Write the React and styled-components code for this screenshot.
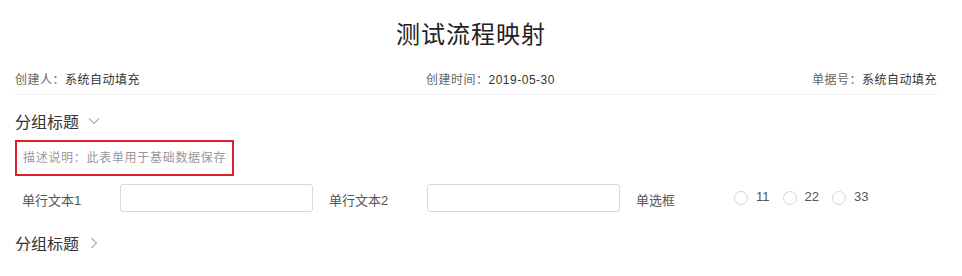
import React from "react";
import styled, { createGlobalStyle } from "styled-components";

const GlobalStyle = createGlobalStyle`
  body {
    margin: 0;
    background: #fff;
    font-family: "Liberation Sans", "Noto Sans CJK SC", sans-serif;
    color: #333;
  }
`;

const Page = styled.div`
  padding: 0 25px 0 15px;
`;

const Title = styled.h1`
  margin: 0;
  padding-top: 18px;
  height: 40px;
  line-height: 34px;
  font-size: 24px;
  font-weight: normal;
  letter-spacing: 1px;
  text-align: center;
  color: #222;
  padding-right: 10px;
`;

const MetaRow = styled.div`
  display: grid;
  grid-template-columns: 411px 1fr auto;
  align-items: center;
  height: 32px;
  padding-top: 4px;
  font-size: 12px;
  letter-spacing: 0.5px;
  border-bottom: 1px dotted #e3e3e3;
`;

const MetaItem = styled.div`
  white-space: nowrap;
`;

const MetaLabel = styled.span`
  color: #666;
`;

const MetaValue = styled.span`
  color: #333;
`;

const GroupHead = styled.div`
  display: flex;
  align-items: center;
  gap: 9px;
  height: 16px;
  margin-top: ${(p) => p.$top}px;
  font-size: 16px;
  color: #333;
  cursor: pointer;
`;

const Chevron = styled.svg`
  width: 12px;
  height: 12px;
  color: #777;
`;

const Desc = styled.div`
  display: inline-block;
  margin-top: 11px;
  padding: 0 6px;
  height: 32px;
  line-height: 32px;
  border: 2px solid #e0202a;
  font-size: 12px;
  letter-spacing: 0.7px;
  color: #999;
`;

const FormRow = styled.div`
  display: grid;
  grid-template-columns: repeat(3, 307px);
  margin-top: 7px;
`;

const Field = styled.div`
  display: flex;
  align-items: center;
  height: 30px;
  padding-right: 9px;
`;

const Label = styled.label`
  flex: 0 0 98px;
  padding-left: 7px;
  font-size: 13px;
  color: #555;
  margin-top: 2px;
`;

const TextInput = styled.input`
  flex: 1;
  min-width: 0;
  height: 28px;
  box-sizing: border-box;
  border: 1px solid #d9d9d9;
  border-radius: 3px;
  outline: none;
  padding: 0 8px;
  font-size: 12px;
`;

const RadioGroup = styled.div`
  display: flex;
  align-items: center;
  gap: 13px;
`;

const RadioItem = styled.label`
  display: flex;
  align-items: center;
  gap: 8px;
  font-size: 13px;
  color: #555;
`;

const RadioCircle = styled.span`
  width: 14px;
  height: 14px;
  box-sizing: border-box;
  border: 1px solid #d6d6d6;
  border-radius: 50%;
  background: #fff;
`;

const RadioText = styled.span`
  margin-top: -4px;
`;

const ChevronIcon = ({ open }) => (
  <Chevron viewBox="0 0 12 12" fill="none" stroke="currentColor" strokeWidth="1">
    {open ? <path d="M1 3.5l5 5 5-5" /> : <path d="M3.5 1l5 5-5 5" />}
  </Chevron>
);

const Group = ({ title, open, top }) => (
  <GroupHead $top={top}>
    {title}
    <ChevronIcon open={open} />
  </GroupHead>
);

export default function App() {
  return (
    <Page>
      <GlobalStyle />
      <Title>测试流程映射</Title>
      <MetaRow>
        <MetaItem>
          <MetaLabel>创建人：</MetaLabel>
          <MetaValue>系统自动填充</MetaValue>
        </MetaItem>
        <MetaItem>
          <MetaLabel>创建时间：</MetaLabel>
          <MetaValue>2019-05-30</MetaValue>
        </MetaItem>
        <MetaItem>
          <MetaLabel>单据号：</MetaLabel>
          <MetaValue>系统自动填充</MetaValue>
        </MetaItem>
      </MetaRow>
      <Group title="分组标题" open top={18} />
      <Desc>描述说明：此表单用于基础数据保存</Desc>
      <FormRow>
        <Field>
          <Label>单行文本1</Label>
          <TextInput />
        </Field>
        <Field>
          <Label>单行文本2</Label>
          <TextInput />
        </Field>
        <Field>
          <Label>单选框</Label>
          <RadioGroup>
            {["11", "22", "33"].map((v) => (
              <RadioItem key={v}>
                <RadioCircle />
                <RadioText>{v}</RadioText>
              </RadioItem>
            ))}
          </RadioGroup>
        </Field>
      </FormRow>
      <Group title="分组标题" top={22} />
    </Page>
  );
}
